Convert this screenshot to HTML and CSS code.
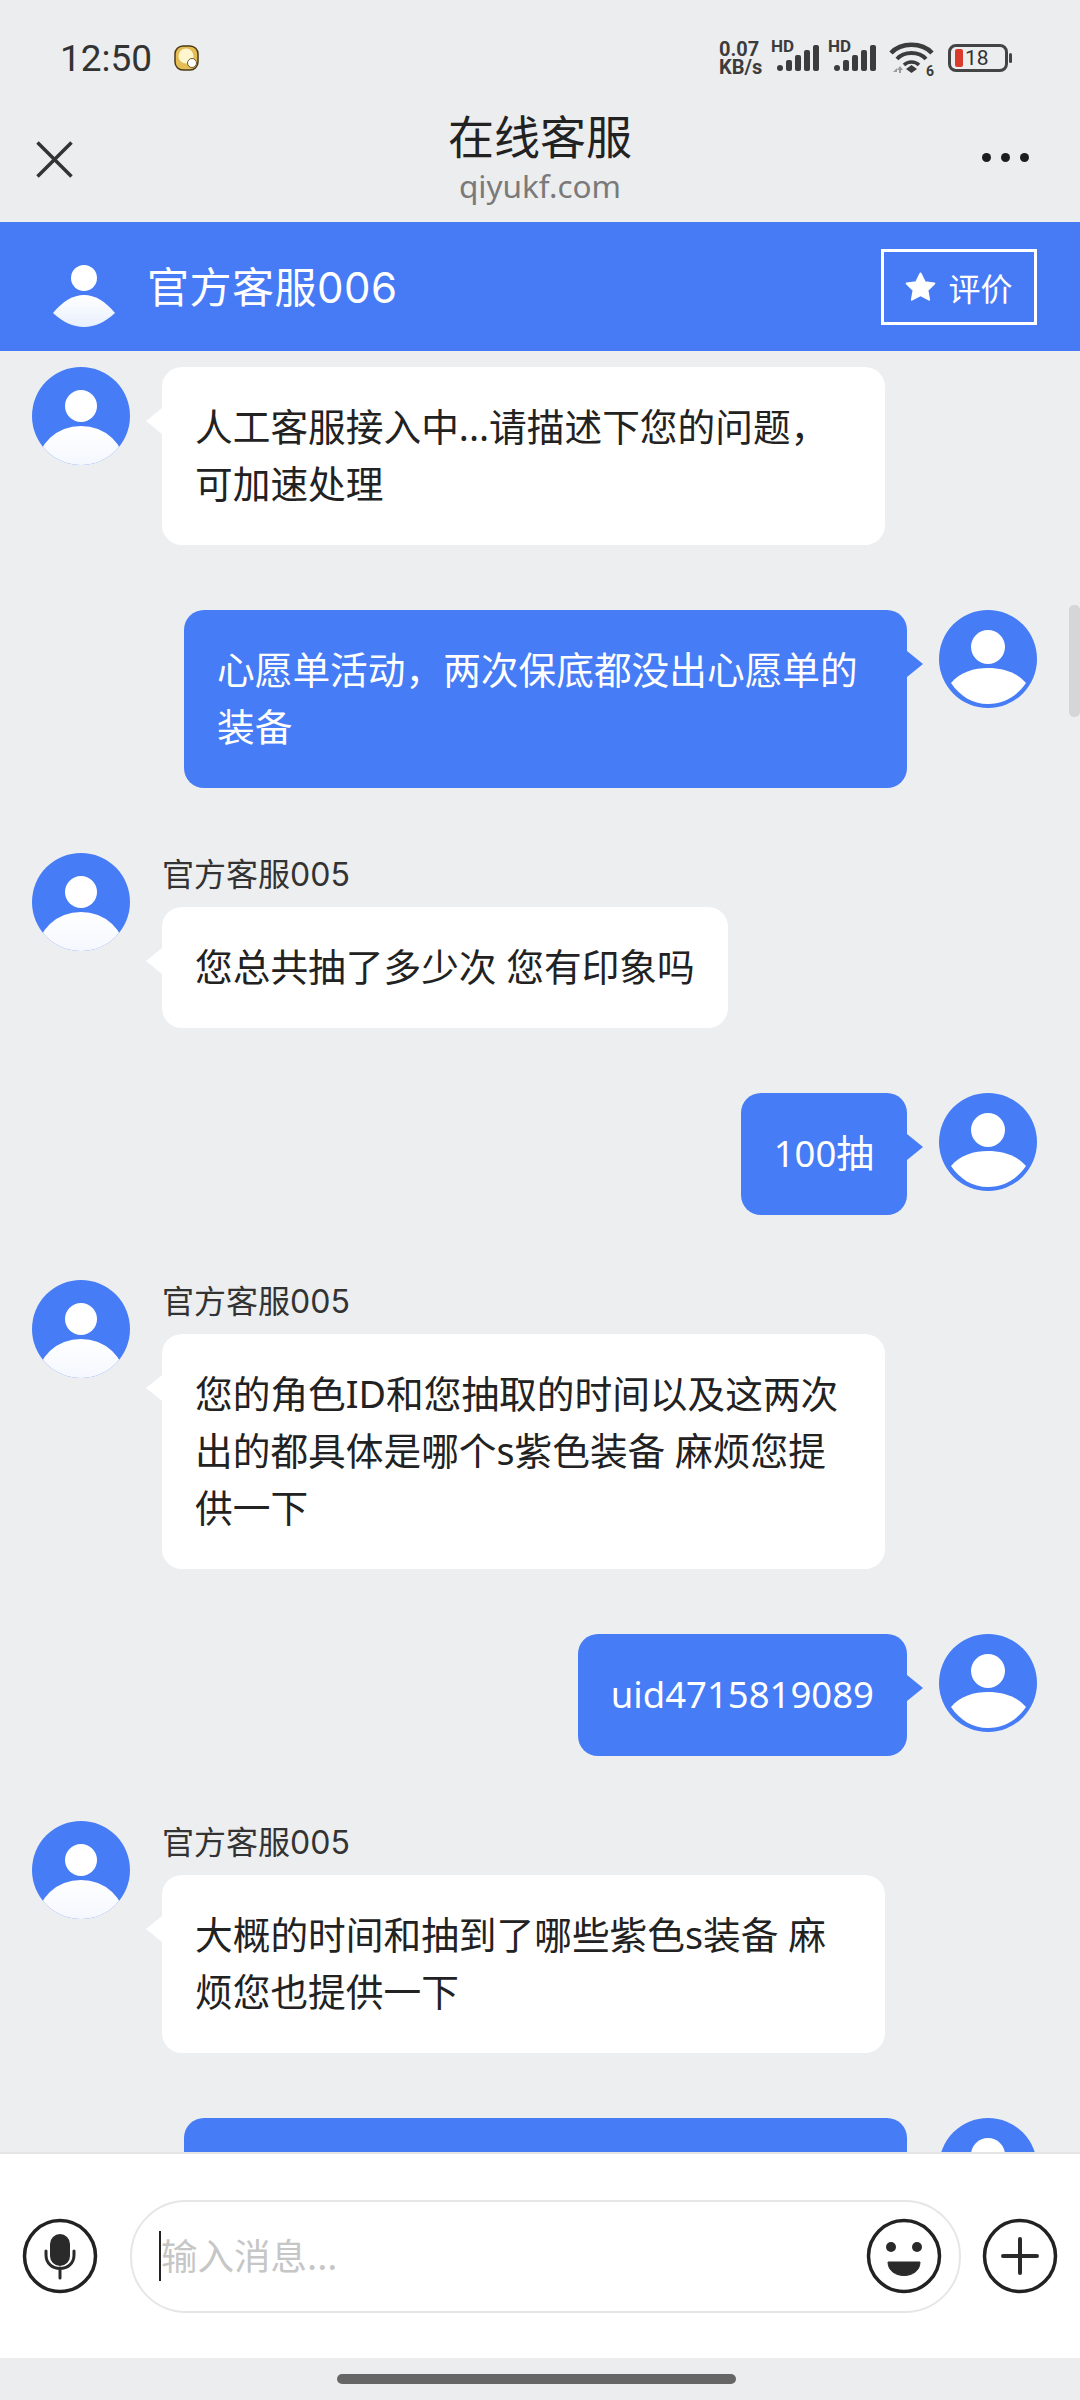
FILE: index.html
```html
<!DOCTYPE html>
<html lang="zh-CN">
<head>
  <meta charset="UTF-8">
  <title>在线客服</title>
  <link rel="stylesheet" href="styles.css">
</head>
<body>

  <!-- shared avatar shapes -->
  <svg class="defs" width="0" height="0">
    <defs>
      <linearGradient id="fade" x1="0" y1="0" x2="0" y2="1">
        <stop offset="0" stop-color="#ffffff"/>
        <stop offset="1" stop-color="#e8effd"/>
      </linearGradient>
      <clipPath id="round"><circle cx="49" cy="49" r="49"/></clipPath>
      <symbol id="agent" viewBox="0 0 98 98">
        <circle cx="49" cy="49" r="49" fill="#467cf6"/>
        <circle cx="49" cy="39" r="16" fill="#fff"/>
        <ellipse cx="49" cy="100" rx="44" ry="41" fill="url(#fade)" clip-path="url(#round)"/>
      </symbol>
      <symbol id="user" viewBox="0 0 98 98">
        <circle cx="49" cy="49" r="49" fill="#467cf6"/>
        <circle cx="49" cy="37" r="17" fill="#fff"/>
        <path d="M12 73C21 62 35 58 49 58C63 58 78 62 87 73C78 86 65 94 49 94C33 94 21 86 12 73Z" fill="#fff"/>
      </symbol>
    </defs>
  </svg>

  <!-- status bar -->
  <div class="status">
    <span class="clock">12:50</span>
    <svg class="coin" width="25" height="26" viewBox="0 0 25 26">
      <rect x="1" y="1" width="23" height="24" rx="8" fill="#e5bd55" stroke="#4a3a1a" stroke-width="1.500"/>
      <circle cx="12" cy="11" r="7.500" fill="#fff6cf"/>
      <circle cx="18" cy="18" r="4.500" fill="#fff" stroke="#6b5a2a"/>
    </svg>
    <div class="status-right">
      <div class="speed"><span>0.07</span><span>KB/s</span></div>
      <div class="signal">
        <span class="hd">HD</span>
        <svg width="48" height="32" viewBox="0 0 48 32">
          <rect x="6" y="23" width="6" height="6" rx="3" fill="#3c3c3c"/>
          <rect x="15" y="18" width="6" height="11" rx="2" fill="#3c3c3c"/>
          <rect x="24" y="13" width="6" height="16" rx="2" fill="#3c3c3c"/>
          <rect x="33" y="8" width="6" height="21" rx="2" fill="#3c3c3c"/>
          <rect x="42" y="3" width="6" height="26" rx="2" fill="#3c3c3c"/>
        </svg>
      </div>
      <div class="signal">
        <span class="hd">HD</span>
        <svg width="48" height="32" viewBox="0 0 48 32">
          <rect x="6" y="23" width="6" height="6" rx="3" fill="#3c3c3c"/>
          <rect x="15" y="18" width="6" height="11" rx="2" fill="#3c3c3c"/>
          <rect x="24" y="13" width="6" height="16" rx="2" fill="#3c3c3c"/>
          <rect x="33" y="8" width="6" height="21" rx="2" fill="#3c3c3c"/>
          <rect x="42" y="3" width="6" height="26" rx="2" fill="#3c3c3c"/>
        </svg>
      </div>
      <div class="wifi">
        <svg width="45" height="34" viewBox="0 0 45 34">
          <path d="M2 12C12 1 33 1 43 12" fill="none" stroke="#3c3c3c" stroke-width="4.500"/>
          <path d="M8 18C15 10 30 10 37 18" fill="none" stroke="#3c3c3c" stroke-width="4"/>
          <path d="M15 24C19 20 26 20 30 24" fill="none" stroke="#3c3c3c" stroke-width="3.500"/>
          <path d="M17 28L22.500 24L28 28L22.500 32Z" fill="#3c3c3c"/>
          <path d="M4 31L8 27V31ZM11 25L14 29H12V32H10V29H8Z" fill="#9a9a9a"/>
        </svg>
        <span class="wifi-six">6</span>
      </div>
      <div class="battery">
        <div class="battery-body"><i class="battery-fill"></i><span>18</span></div>
        <i class="battery-cap"></i>
      </div>
    </div>
  </div>

  <!-- title bar -->
  <div class="titlebar">
    <svg class="close" width="37" height="37" viewBox="0 0 37 37">
      <path d="M1.500 1.500L35.500 35.500M35.500 1.500L1.500 35.500" stroke="#333" stroke-width="3.500" fill="none"/>
    </svg>
    <div class="title-text">
      <div class="title">在线客服</div>
      <div class="domain">qiyukf.com</div>
    </div>
    <div class="more"><i></i><i></i><i></i></div>
  </div>

  <!-- agent header -->
  <div class="agent-bar">
    <svg class="agent-pic" width="62" height="62" viewBox="0 0 62 62">
      <circle cx="31" cy="13" r="13" fill="#fff"/>
      <path d="M0 48C10 36 20 30 31 30C42 30 52 36 62 48C52 57 42 62 31 62C20 62 10 57 0 48Z" fill="url(#fade)"/>
    </svg>
    <div class="agent-name">官方客服006</div>
    <div class="rate">
      <svg width="31" height="30" viewBox="0 0 30 30">
        <path d="M15 1.500L19.300 10.200L28.800 11.500L21.900 18.200L23.600 27.700L15 23.200L6.400 27.700L8.100 18.200L1.200 11.500L10.700 10.200Z" fill="#fff" stroke="#fff" stroke-width="2" stroke-linejoin="round"/>
      </svg>
      <span>评价</span>
    </div>
  </div>

  <!-- messages -->
  <div class="chat">
    <div class="msg">
      <svg class="avatar"><use href="#agent"/></svg>
      <div class="msg-body">
        <div class="bubble wide">人工客服接入中...请描述下您的问题，可加速处理</div>
      </div>
    </div>

    <div class="msg mine">
      <div class="bubble wide">心愿单活动，两次保底都没出心愿单的装备</div>
      <svg class="avatar"><use href="#user"/></svg>
    </div>

    <div class="msg">
      <svg class="avatar"><use href="#agent"/></svg>
      <div class="msg-body">
        <div class="sender">官方客服005</div>
        <div class="bubble">您总共抽了多少次 您有印象吗</div>
      </div>
    </div>

    <div class="msg mine">
      <div class="bubble"><span class="latin">100</span>抽</div>
      <svg class="avatar"><use href="#user"/></svg>
    </div>

    <div class="msg">
      <svg class="avatar"><use href="#agent"/></svg>
      <div class="msg-body">
        <div class="sender">官方客服005</div>
        <div class="bubble wide">您的角色ID和您抽取的时间以及这两次出的都具体是哪个s紫色装备 麻烦您提供一下</div>
      </div>
    </div>

    <div class="msg mine">
      <div class="bubble"><span class="latin">uid4715819089</span></div>
      <svg class="avatar"><use href="#user"/></svg>
    </div>

    <div class="msg">
      <svg class="avatar"><use href="#agent"/></svg>
      <div class="msg-body">
        <div class="sender">官方客服005</div>
        <div class="bubble wide">大概的时间和抽到了哪些紫色s装备 麻烦您也提供一下</div>
      </div>
    </div>

    <div class="msg mine">
      <div class="bubble wide">&nbsp;<br>&nbsp;</div>
      <svg class="avatar"><use href="#user"/></svg>
    </div>

    <div class="scrollbar"></div>
  </div>

  <!-- input bar -->
  <div class="inputbar">
    <svg class="tool" width="76" height="76" viewBox="0 0 76 76">
      <circle cx="38" cy="38" r="35.500" fill="none" stroke="#222" stroke-width="3.500"/>
      <rect x="28" y="16" width="20" height="32" rx="10" fill="#2a2a2a"/>
      <path d="M24 33V37C24 55 52 55 52 37V33M38 50V60" fill="none" stroke="#2a2a2a" stroke-width="3" stroke-linecap="round"/>
    </svg>
    <div class="input">
      <i class="caret"></i>
      <span class="placeholder">输入消息...</span>
      <svg class="tool" width="76" height="76" viewBox="0 0 76 76">
        <circle cx="38" cy="38" r="35.500" fill="none" stroke="#222" stroke-width="3.500"/>
        <circle cx="25" cy="29" r="5" fill="#2a2a2a"/>
        <circle cx="51" cy="29" r="5" fill="#2a2a2a"/>
        <path d="M22 44H54C54 62 22 62 22 44Z" fill="#2a2a2a" stroke="#2a2a2a" stroke-linejoin="round"/>
      </svg>
    </div>
    <svg class="tool" width="76" height="76" viewBox="0 0 76 76">
      <circle cx="38" cy="38" r="35.500" fill="none" stroke="#222" stroke-width="3.500"/>
      <path d="M38 21V55M21 38H55" fill="none" stroke="#2a2a2a" stroke-width="4" stroke-linecap="round"/>
    </svg>
  </div>

  <!-- gesture bar -->
  <div class="navbar"><i class="home"></i></div>

</body>
</html>
```

FILE: styles.css
```css
body {
  margin: 0;
  width: 1080px;
  height: 2400px;
  display: flex;
  flex-direction: column;
  overflow: hidden;
  background-color: #ecedee;
  color: #222;
  font-family: "Noto Sans CJK SC", sans-serif;
}
.defs {
  position: absolute;
}

/* status bar */
.status {
  height: 100px;
  flex: none;
  display: flex;
  align-items: center;
  padding: 16px 68px 0 60px;
  box-sizing: border-box;
}
.clock {
  font-family: Roboto, sans-serif;
  font-size: 37px;
  color: #333;
}
.coin {
  margin-left: 22px;
}
.status-right {
  margin-left: auto;
  display: flex;
  align-items: center;
}
.speed {
  display: flex;
  flex-direction: column;
  width: 45px;
  font-family: Roboto, sans-serif;
  font-size: 20px;
  font-weight: 700;
  line-height: 18px;
  color: #3c3c3c;
  margin-right: 7px;
}
.signal {
  position: relative;
  width: 48px;
  height: 32px;
  margin-right: 9px;
}
.hd {
  position: absolute;
  left: 0;
  top: -4px;
  font-family: Roboto, sans-serif;
  font-size: 17px;
  line-height: 17px;
  font-weight: 700;
  color: #3c3c3c;
}
.wifi {
  position: relative;
  width: 45px;
  height: 34px;
  margin-left: 4px;
  margin-right: 14px;
}
.wifi-six {
  position: absolute;
  right: 0;
  bottom: -3px;
  font-family: Roboto, sans-serif;
  font-size: 14px;
  line-height: 14px;
  font-weight: 700;
  color: #3c3c3c;
}
.battery {
  display: flex;
  align-items: center;
  gap: 1px;
}
.battery-body {
  width: 60px;
  height: 28px;
  border: 3px solid #444;
  border-radius: 8px;
  box-sizing: border-box;
  display: flex;
  align-items: center;
  padding-left: 4px;
  gap: 2px;
  font-family: Roboto, sans-serif;
  font-size: 21px;
  color: #333;
}
.battery-fill {
  width: 8px;
  height: 18px;
  background-color: #d93a2b;
  border-radius: 2px;
}
.battery-cap {
  width: 3px;
  height: 10px;
  background-color: #444;
  border-radius: 2px;
}

/* title bar */
.titlebar {
  height: 122px;
  flex: none;
  display: grid;
  grid-template-columns: 1fr auto 1fr;
  align-items: center;
}
.close {
  margin: -4px 0 0 36px;
}
.title-text {
  text-align: center;
  margin-bottom: 12px;
}
.title {
  font-size: 46px;
  line-height: 62px;
  color: #222;
}
.domain {
  font-family: "Noto Sans", sans-serif;
  font-size: 31.500px;
  line-height: 42px;
  color: #7a7a7a;
}
.more {
  justify-self: end;
  display: flex;
  gap: 10px;
  margin: -8px 51px 0 0;
}
.more i {
  width: 9px;
  height: 9px;
  border-radius: 50%;
  background-color: #1d1d1d;
}

/* agent header */
.agent-bar {
  height: 129px;
  flex: none;
  display: flex;
  align-items: center;
  padding: 0 43px 0 53px;
  box-sizing: border-box;
  background-color: #467bf5;
  color: #fff;
}
.agent-pic {
  margin-top: 19px;
}
.agent-name {
  margin: 0 0 5px 32px;
  font-family: Inter, "Noto Sans CJK SC", sans-serif;
  font-size: 42px;
  letter-spacing: 0.500px;
}
.rate {
  margin-left: auto;
  width: 156px;
  height: 76px;
  border: 3px solid #fff;
  box-sizing: border-box;
  display: flex;
  align-items: center;
  justify-content: center;
  gap: 12px;
  font-size: 32px;
}

/* messages */
.chat {
  flex: 1;
  min-height: 0;
  position: relative;
  overflow: hidden;
  display: flex;
  flex-direction: column;
  gap: 65px;
  padding-top: 16px;
  background-color: #eceef0;
}
.msg {
  display: flex;
  gap: 32px;
  padding: 0 43px 0 32px;
  flex: none;
}
.mine {
  justify-content: flex-end;
}
.avatar {
  width: 98px;
  height: 98px;
  flex: none;
}
.msg-body {
  display: flex;
  flex-direction: column;
  align-items: flex-start;
}
.sender {
  font-family: Inter, "Noto Sans CJK SC", sans-serif;
  font-size: 32px;
  line-height: 44px;
  margin-bottom: 10px;
  color: #333;
}
.bubble {
  position: relative;
  padding: 31px 33px 33px;
  border-radius: 20px;
  background-color: #fff;
  font-family: "Noto Sans", "Noto Sans CJK SC", sans-serif;
  font-size: 37.700px;
  line-height: 57px;
  color: #222;
}
.latin {
  font-size: 36.500px;
}
.bubble.wide {
  width: 723px;
  box-sizing: border-box;
}
.bubble::after {
  content: "";
  position: absolute;
  top: 41px;
  left: -16px;
  border-style: solid;
  border-width: 13px 16px 13px 0;
  border-color: transparent #fff transparent transparent;
}
.mine .bubble {
  background-color: #467cf6;
  color: #fff;
}
.mine .bubble::after {
  left: auto;
  right: -16px;
  border-width: 13px 0 13px 16px;
  border-color: transparent transparent transparent #467cf6;
}
.scrollbar {
  position: absolute;
  top: 254px;
  right: 0;
  width: 11px;
  height: 112px;
  border-radius: 5px;
  background-color: #d5d6d8;
}

/* input bar */
.inputbar {
  height: 206px;
  flex: none;
  display: flex;
  align-items: center;
  padding: 0 22px;
  box-sizing: border-box;
  background-color: #fff;
  border-top: 2px solid #e4e5e7;
}
.tool {
  flex: none;
}
.input {
  position: relative;
  flex: 1;
  height: 113px;
  margin: 0 21px 0 32px;
  padding: 0 17px 0 29px;
  box-sizing: border-box;
  display: flex;
  align-items: center;
  border: 2px solid #e6e6e6;
  border-radius: 56px;
}
.caret {
  position: absolute;
  left: 27px;
  top: 29px;
  width: 2px;
  height: 50px;
  background-color: #222;
}
.placeholder {
  font-size: 36.500px;
  color: #c6c6c6;
  margin-bottom: 4px;
}
.input .tool {
  margin-left: auto;
}

/* gesture bar */
.navbar {
  height: 42px;
  flex: none;
  display: flex;
  justify-content: center;
  padding: 16px 7px 0 0;
  box-sizing: border-box;
}
.home {
  width: 399px;
  height: 10px;
  border-radius: 5px;
  background-color: #666;
}
```
